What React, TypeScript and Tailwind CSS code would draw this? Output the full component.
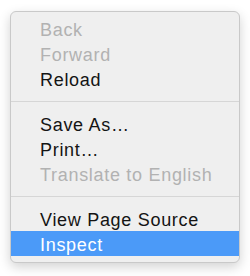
type Item = { label: string; disabled?: boolean; active?: boolean } | "sep";

const items: Item[] = [
  { label: "Back", disabled: true },
  { label: "Forward", disabled: true },
  { label: "Reload" },
  "sep",
  { label: "Save As…" },
  { label: "Print…" },
  { label: "Translate to English", disabled: true },
  "sep",
  { label: "View Page Source" },
  { label: "Inspect", active: true },
];

export default function App() {
  return (
    <div className="h-[276px] w-[250px] bg-white pl-[10px] pt-[11px] font-['Liberation_Sans',Arial,sans-serif]">
      <div className="w-[230px] overflow-hidden rounded-[6px] border border-[#c9c9c9] bg-[#efefef] pb-[6px] pt-[4px] shadow-[0_4px_12px_rgba(0,0,0,0.18)]">
        {items.map((item, i) =>
          item === "sep" ? (
            <div key={i} className="flex h-[20px] items-center">
              <div className="h-px w-full bg-[#d6d6d6]" />
            </div>
          ) : (
            <div
              key={i}
              className={
                "h-[25px] pl-[29px] pt-[2px] text-[18px] leading-[25px] tracking-[0.7px] " +
                (item.active
                  ? "bg-[#4b9af8] text-white"
                  : item.disabled
                    ? "text-[#b2b2b2]"
                    : "text-[#141414]")
              }
            >
              {item.label}
            </div>
          ),
        )}
      </div>
    </div>
  );
}
